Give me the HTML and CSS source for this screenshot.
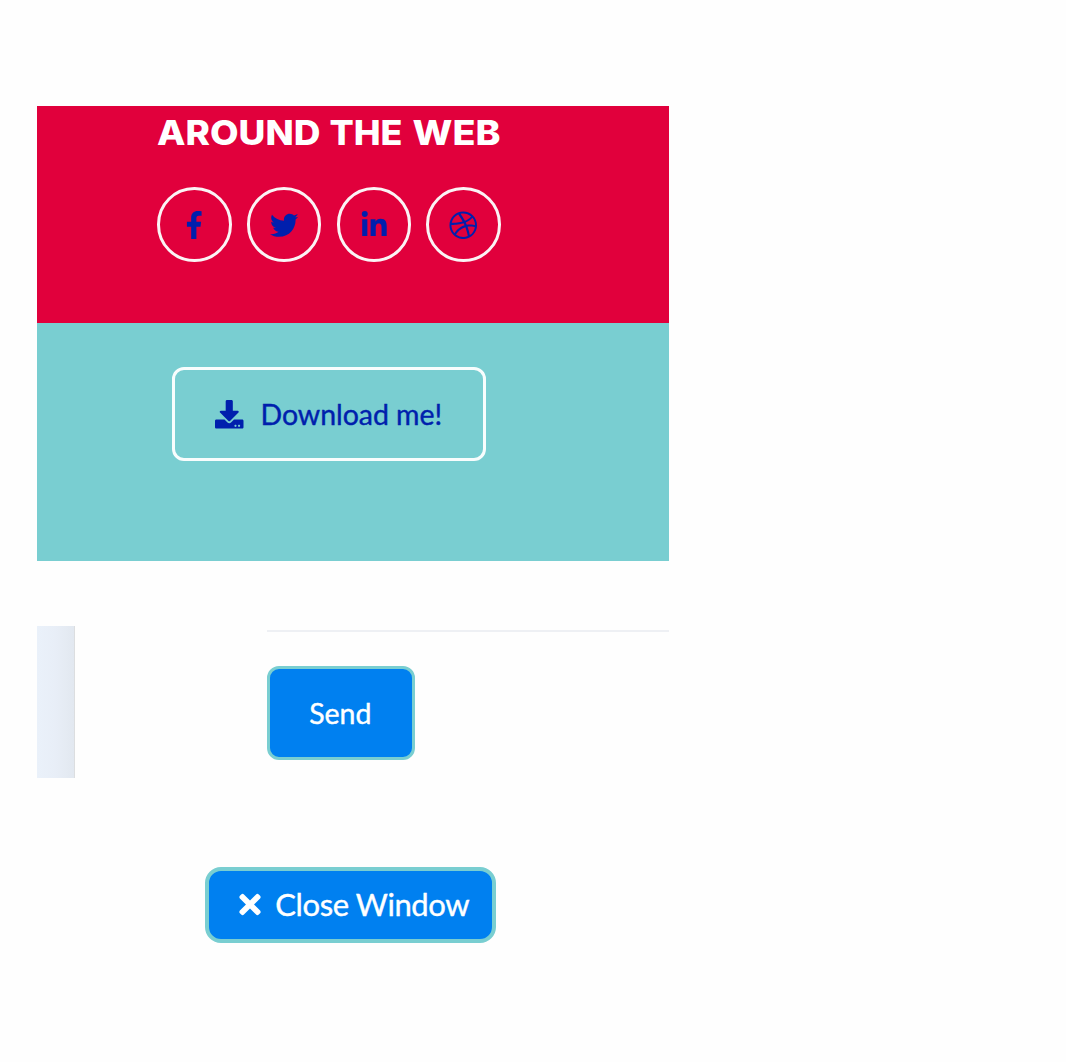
FILE: index.html
```html
<!DOCTYPE html>
<html lang="en">
<head>
<meta charset="utf-8">
<title>Around the Web</title>
<link rel="stylesheet" href="styles.css">
</head>
<body>
<main class="page">
  <section class="around">
    <div class="around-inner">
      <h2 class="title">
        <svg width="344" height="40" viewBox="0 0 344 40">
          <text x="0" y="32.2" textLength="163.5" lengthAdjust="spacingAndGlyphs">AROUND</text>
          <text x="172.5" y="32.2" textLength="73" lengthAdjust="spacingAndGlyphs">THE</text>
          <text x="255.5" y="32.2" textLength="88" lengthAdjust="spacingAndGlyphs">WEB</text>
        </svg>
      </h2>
      <nav class="social">
        <a class="circle" aria-label="Facebook"><svg class="icon" viewBox="-124 0 512 512"><path d="M76.7 512V283H0v-91h76.7v-71.7C76.7 42.4 124.3 0 193.8 0c33.3 0 61.9 2.5 70.2 3.6V85h-48.2c-37.8 0-45.1 18-45.1 44.3V192H256l-11.7 91h-73.6v229"/></svg></a>
        <a class="circle" aria-label="Twitter"><svg class="icon" viewBox="0 0 512 512"><path d="M459.37 151.716c.325 4.548.325 9.097.325 13.645 0 138.72-105.583 298.558-298.558 298.558-59.452 0-114.68-17.219-161.137-47.106 8.447.974 16.568 1.299 25.34 1.299 49.055 0 94.213-16.568 130.274-44.832-46.132-.975-84.792-31.188-98.112-72.772 6.498.974 12.995 1.624 19.818 1.624 9.421 0 18.843-1.3 27.614-3.573-48.081-9.747-84.143-51.98-84.143-102.985v-1.299c13.969 7.797 30.214 12.67 47.431 13.319-28.264-18.843-46.781-51.005-46.781-87.391 0-19.492 5.197-37.36 14.294-52.954 51.655 63.675 129.3 105.258 216.365 109.807-1.624-7.797-2.599-15.918-2.599-24.04 0-57.828 46.782-104.934 104.934-104.934 30.213 0 57.502 12.67 76.67 33.137 23.715-4.548 46.456-13.32 66.599-25.34-7.798 24.366-24.366 44.833-46.132 57.827 21.117-2.273 41.584-8.122 60.426-16.243-14.292 20.791-32.161 39.308-52.628 54.253z"/></svg></a>
        <a class="circle" aria-label="LinkedIn"><svg class="icon" viewBox="-32 0 512 512"><path d="M100.28 448H7.4V148.9h92.88zM53.79 108.1C24.09 108.1 0 83.5 0 53.8a53.79 53.79 0 0 1 107.58 0c0 29.7-24.1 54.3-53.79 54.3zM447.9 448h-92.68V302.4c0-34.7-.7-79.2-48.29-79.2-48.29 0-55.69 37.7-55.69 76.7V448h-92.78V148.9h89.08v40.8h1.3c12.4-23.5 42.69-48.3 87.88-48.3 94 0 111.28 61.9 111.28 142.3V448z"/></svg></a>
        <a class="circle" aria-label="Dribbble"><svg class="icon" viewBox="0 0 512 512"><path d="M256 8C119.252 8 8 119.252 8 256s111.252 248 248 248 248-111.252 248-248S392.748 8 256 8zm163.97 114.366c29.503 36.046 47.369 81.957 47.835 131.955-6.984-1.477-77.018-15.682-147.502-6.818-5.752-14.041-11.181-26.393-18.617-41.614 78.321-31.977 113.818-77.482 118.284-83.523zM396.421 97.87c-3.81 5.427-35.697 48.286-111.021 76.519-34.712-63.776-73.185-116.168-79.04-124.008 67.176-16.193 137.966 1.27 190.061 47.489zm-230.48-33.25c5.585 7.659 43.438 60.116 78.537 122.509-99.087 26.313-186.36 25.934-195.834 25.809C62.38 147.205 106.678 92.573 165.941 64.62zM44.17 256.323c0-2.166.043-4.322.108-6.473 9.268.19 111.92 1.513 217.706-30.146 6.064 11.868 11.857 23.915 17.174 35.949-76.599 21.575-146.194 83.527-180.531 142.306C64.794 360.405 44.17 310.73 44.17 256.323zm81.807 167.113c22.127-45.233 82.178-103.622 167.579-132.756 29.74 77.283 42.039 142.053 45.189 160.638-68.112 29.013-150.015 21.053-212.768-27.882zm248.38 8.489c-2.171-12.886-13.446-74.897-41.152-151.033 66.38-10.626 124.7 6.768 131.947 9.055-9.442 58.941-43.273 109.844-90.795 141.978z"/></svg></a>
      </nav>
    </div>
  </section>
  <section class="download">
    <a class="btn btn-download"><svg class="icon" viewBox="0 0 512 512"><path d="M216 0h80c13.3 0 24 10.7 24 24v168h87.7c17.8 0 26.7 21.5 14.1 34.1L269.7 378.3c-7.5 7.5-19.8 7.5-27.3 0L90.1 226.1c-12.6-12.6-3.7-34.1 14.1-34.1H192V24c0-13.3 10.7-24 24-24zm296 376v112c0 13.3-10.7 24-24 24H24c-13.3 0-24-10.7-24-24V376c0-13.3 10.7-24 24-24h146.7l49 49c20.1 20.1 52.5 20.1 72.6 0l49-49H488c13.3 0 24 10.7 24 24zm-124 88c0-11-9-20-20-20s-20 9-20 20 9 20 20 20 20-9 20-20zm64 0c0-11-9-20-20-20s-20 9-20 20 9 20 20 20 20-9 20-20z"/></svg><span>Download me!</span></a>
  </section>
  <section class="contact">
    <div class="sidebar"></div>
    <div class="form-end"><button class="btn btn-send">Send</button></div>
  </section>
  <button class="btn btn-close"><svg class="close-icon" viewBox="0 0 352 512"><path d="M242.72 256l100.07-100.07c12.28-12.28 12.28-32.19 0-44.48l-22.24-22.24c-12.28-12.28-32.19-12.28-44.48 0L176 189.28 75.93 89.21c-12.28-12.28-32.19-12.28-44.48 0L9.21 111.45c-12.28 12.28-12.28 32.19 0 44.48L109.28 256 9.21 356.07c-12.28 12.28-12.28 32.19 0 44.48l22.24 22.24c12.28 12.28 32.2 12.28 44.48 0L176 322.72l100.07 100.07c12.28 12.28 32.2 12.28 44.48 0l22.24-22.24c12.28-12.28 12.28-32.19 0-44.48L242.72 256z"/></svg><span>Close Window</span></button>
</main>
</body>
</html>
```
FILE: styles.css
```css
* { box-sizing: border-box; }

body {
  margin: 0;
  background: #fefefe;
  font-family: Lato, "Liberation Sans", sans-serif;
}

.page {
  width: 669px;
  padding: 106px 0 0 37px;
}

.around {
  height: 217px;
  padding: 7px 0 0 120px;
  background: #e1003c;
}

.title {
  height: 40px;
  margin: 0 0 34.4px;
}

.title svg { display: block; }

.title text {
  fill: #fff;
  font-family: Inter, "Liberation Sans", sans-serif;
  font-size: 34.5px;
  font-weight: 800;
}

.social {
  display: flex;
  gap: 15.2px;
}

.circle {
  display: flex;
  align-items: center;
  justify-content: center;
  width: 74.6px;
  height: 74.6px;
  padding-top: 1px;
  border: 3px solid #fbf3f5;
  border-radius: 50%;
}

.icon {
  width: 28.5px;
  height: 28.5px;
  fill: #001fad;
}

.download {
  height: 238px;
  padding: 43.5px 0 0 135px;
  background: #79ced1;
}

.btn {
  display: flex;
  align-items: center;
  margin: 0;
  font-family: inherit;
  font-size: 28.5px;
  line-height: 1;
  letter-spacing: -0.05px;
  white-space: nowrap;
  -webkit-text-stroke: 0.4px currentColor;
}

.btn-download {
  width: 314px;
  height: 94.5px;
  padding: 1px 0 0 40px;
  gap: 17px;
  border: 3px solid #f8fdfd;
  border-radius: 12px;
  color: #001fad;
}

.contact {
  display: flex;
  height: 152px;
  margin-top: 65px;
}

.sidebar {
  width: 38px;
  margin-right: 192px;
  border-right: 1px solid #dcdee0;
  background: linear-gradient(90deg, #eaf1fa, #e8eef7 50%, #e2e8f0);
}

.form-end {
  flex: 1;
  margin-top: 4px;
  padding-top: 34px;
  border-top: 2px solid #eef0f4;
}

.btn-send,
.btn-close {
  justify-content: center;
  padding: 0;
  background: #0080f0;
  color: #fff;
  border: 3px solid #79ced1;
}

.btn-send {
  width: 147.5px;
  height: 94px;
  padding-right: 1px;
  border-radius: 12px;
}

.btn-close {
  width: 290.5px;
  height: 76px;
  margin: 88.5px 0 0 168px;
  gap: 14px;
  padding-left: 8px;
  border-width: 4px;
  border-radius: 16px;
  font-size: 31px;
  letter-spacing: -0.4px;
}

.close-icon {
  width: 22px;
  height: 31px;
  fill: #fff;
}
```
